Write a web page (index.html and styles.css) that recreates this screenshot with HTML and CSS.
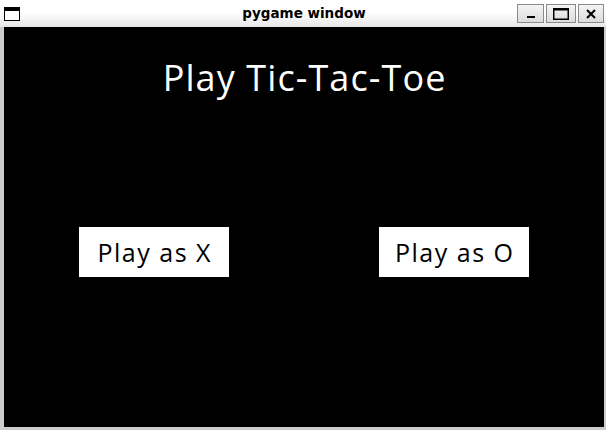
FILE: index.html
```html
<!DOCTYPE html>
<html>
<head>
<meta charset="utf-8">
<link rel="stylesheet" href="styles.css">
</head>
<body>
<div class="window">
  <div class="titlebar">
    <svg class="app-icon" width="16" height="14" viewBox="0 0 16 14">
      <rect x="0.5" y="0.5" width="15" height="13" fill="#fff" stroke="#000"/>
      <rect x="0" y="0" width="16" height="4" fill="#000"/>
    </svg>
    <div class="title">pygame window</div>
    <div class="controls">
      <div class="ctl ctl-min">
        <svg width="10" height="10" viewBox="0 0 10 10"><rect x="1" y="7" width="8" height="2" fill="#000"/></svg>
      </div>
      <div class="ctl ctl-max">
        <svg width="16" height="12" viewBox="0 0 16 12"><rect x="0.75" y="0.75" width="14.5" height="10.5" fill="none" stroke="#000" stroke-width="1.5"/><rect x="0" y="0" width="16" height="2.5" fill="#000"/></svg>
      </div>
      <div class="ctl ctl-close">
        <svg width="10" height="10" viewBox="0 0 10 10"><path d="M1 1 L9 9 M9 1 L1 9" stroke="#000" stroke-width="2"/></svg>
      </div>
    </div>
  </div>
  <div class="canvas">
    <div class="heading">Play Tic-Tac-Toe</div>
    <div class="buttons">
      <div class="btn"><span class="label">Play as X</span></div>
      <div class="btn"><span class="label">Play as O</span></div>
    </div>
  </div>
</div>
</body>
</html>
```
FILE: styles.css
```css
html, body {
  margin: 0;
  padding: 0;
}
body {
  width: 606px;
  height: 430px;
  background: #cccccc;
  overflow: hidden;
}
.window {
  display: flex;
  flex-direction: column;
}
.titlebar {
  height: 27px;
  display: flex;
  align-items: center;
  position: relative;
  background: linear-gradient(#ffffff 0%, #ffffff 45%, #e6e6e6 100%);
  box-sizing: border-box;
}
.app-icon {
  margin-left: 4px;
}
.title {
  position: absolute;
  left: 0;
  right: 0;
  top: 0;
  height: 27px;
  line-height: 26px;
  text-align: center;
  font-family: "DejaVu Sans", sans-serif;
  font-weight: bold;
  font-size: 13.5px;
  color: #000;
  padding-left: 2px;
}
.controls {
  margin-left: auto;
  margin-right: 2px;
  display: flex;
  gap: 2px;
  position: relative;
}
.ctl {
  height: 19px;
  box-sizing: border-box;
  border: 1px solid #8a8a8a;
  background: linear-gradient(#f4f4f4, #dcdcdc);
  display: flex;
  align-items: center;
  justify-content: center;
}
.ctl-min { width: 27px; }
.ctl-max { width: 30px; }
.ctl-close { width: 26px; }
.canvas {
  margin-left: 4px;
  width: 600px;
  height: 400px;
  background: #000;
  display: flex;
  flex-direction: column;
  align-items: center;
}
.heading {
  margin-top: 33px;
  font-family: "Open Sans", sans-serif;
  font-size: 36px;
  line-height: 36px;
  letter-spacing: 1.1px;
  margin-right: -1.1px;
  color: #fff;
}
.buttons {
  margin-top: 131px;
  align-self: stretch;
  display: flex;
  padding-left: 75px;
  gap: 150px;
}
.btn {
  width: 150px;
  height: 50px;
  background: #fff;
  color: #000;
  display: flex;
  align-items: center;
  justify-content: center;
  font-family: "Open Sans", sans-serif;
  font-size: 25px;
}
.label {
  letter-spacing: 1.5px;
  margin-right: -1.5px;
}
```
